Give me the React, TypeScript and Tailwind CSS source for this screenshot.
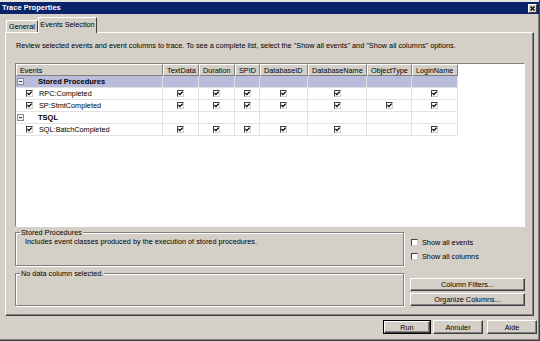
import React from "react";

const colW = [
  "w-[147px]",
  "w-[36px]",
  "w-[36px]",
  "w-[25px]",
  "w-[48px]",
  "w-[59px]",
  "w-[45px]",
  "w-[46px]",
];
const headers = ["Events", "TextData", "Duration", "SPID", "DatabaseID", "DatabaseName", "ObjectType", "LoginName"];

type Row =
  | { kind: "group"; label: string; selected?: boolean }
  | { kind: "item"; label: string; checks: boolean[] };

const rows: Row[] = [
  { kind: "group", label: "Stored Procedures", selected: true },
  { kind: "item", label: "RPC:Completed", checks: [true, true, true, true, true, false, true] },
  { kind: "item", label: "SP:StmtCompleted", checks: [true, true, true, true, true, true, true] },
  { kind: "group", label: "TSQL" },
  { kind: "item", label: "SQL:BatchCompleted", checks: [true, true, true, true, true, false, true] },
];

function Box({ checked }: { checked?: boolean }) {
  return (
    <span className="flex h-[7px] w-[7px] shrink-0 items-center justify-center border border-t-[#404040] border-l-[#404040] border-r-[#d4d0c8] border-b-[#d4d0c8] bg-white">
      {checked && (
        <svg width="5" height="5" viewBox="0 0 5 5">
          <path d="M0.4 2 L1.9 3.6 L4.6 0.7" fill="none" stroke="#000" strokeWidth="1.3" />
        </svg>
      )}
    </span>
  );
}

function Btn({ children, className }: { children: React.ReactNode; className: string }) {
  return (
    <div
      className={
        "flex items-center justify-center border border-t-white border-l-white border-r-[#404040] border-b-[#404040] shadow-[inset_-1px_-1px_0_#808080] " +
        className
      }
    >
      {children}
    </div>
  );
}

export default function App() {
  return (
    <div className="flex h-[341px] w-[540px] flex-col overflow-hidden border-r border-b border-[#404040] bg-[#d4d0c8] font-['Liberation_Sans',Arial,sans-serif] text-[7.3px] leading-[9px] text-black shadow-[inset_-1px_-1px_0_#808080]">
      {/* top strip */}
      <div className="h-[2px] shrink-0 bg-[#e6e4df]" />
      {/* title bar */}
      <div className="flex h-[12px] shrink-0 items-center justify-between bg-[#0a246a] pl-[2px] pr-[2px]">
        <span className="text-[7.5px] font-bold leading-[10px] text-white">Trace Properties</span>
        <span className="flex h-[9px] w-[9px] items-center justify-center border border-t-white border-l-white border-r-[#404040] border-b-[#404040] bg-[#d4d0c8]">
          <svg width="5" height="5" viewBox="0 0 5 5">
            <path d="M0.5 0.5 L4.5 4.5 M4.5 0.5 L0.5 4.5" stroke="#000" strokeWidth="1.2" />
          </svg>
        </span>
      </div>
      {/* tabs */}
      <div className="flex h-[18px] shrink-0 items-end pl-[6px]">
        <div className="flex h-[12px] w-[32px] items-center justify-center rounded-t-[1px] border-t border-l border-r border-t-white border-l-white border-r-[#404040]">
          General
        </div>
        <div className="relative z-10 -mb-[1px] flex h-[16px] w-[59px] items-center justify-center rounded-t-[1px] border-t border-l border-r border-t-white border-l-white border-r-[#404040] bg-[#d4d0c8] pb-[2px] whitespace-nowrap">
          Events Selection
        </div>
      </div>
      {/* panel */}
      <div className="ml-[5px] flex h-[284px] w-[529px] shrink-0 flex-col border border-t-white border-l-white border-r-[#404040] border-b-[#404040] pl-[9px] pt-[8px] shadow-[inset_-1px_-1px_0_#808080]">
        <p className="ml-[1px] h-[9px] whitespace-nowrap">
          Review selected events and event columns to trace. To see a complete list, select the "Show all events" and "Show all columns" options.
        </p>
        {/* table */}
        <div className="mt-[13px] flex h-[164px] w-[510px] shrink-0 flex-col border border-t-[#808080] border-l-[#808080] border-r-white border-b-white bg-white">
          <div className="flex h-[12px] shrink-0">
            {headers.map((h, i) => (
              <div
                key={h}
                className={
                  colW[i] +
                  " flex items-center border border-t-white border-l-white border-r-[#808080] border-b-[#808080] bg-[#d4d0c8] pl-[3px] whitespace-nowrap overflow-hidden"
                }
              >
                {h}
              </div>
            ))}
          </div>
          {rows.map((r, ri) =>
            r.kind === "group" ? (
              <div key={ri} className={"flex h-[12px] w-[442px] shrink-0 border-b border-[#e2e2e2] " + (r.selected ? "bg-[#b9bcda]" : "bg-white")}>
                <div className="flex w-[147px] items-center border-r border-[#e2e2e2]">
                  <span className="ml-[1px] flex h-[7px] w-[7px] items-center justify-center border border-[#8a8a8a] bg-[#f2f2f2]">
                    <span className="h-[1px] w-[3px] bg-[#333]" />
                  </span>
                  <span className="ml-[14px] text-[7.5px] font-bold">{r.label}</span>
                </div>
                {colW.slice(1).map((c, ci) => (
                  <div key={ci} className={c + " border-r border-[#e2e2e2]"} />
                ))}
              </div>
            ) : (
              <div key={ri} className="flex h-[12px] w-[442px] shrink-0 border-b border-[#e2e2e2]">
                <div className="flex w-[147px] items-center border-r border-[#e2e2e2]">
                  <span className="ml-[10px]">
                    <Box checked />
                  </span>
                  <span className="ml-[6px] whitespace-nowrap">{r.label}</span>
                </div>
                {colW.slice(1).map((c, ci) => (
                  <div key={ci} className={c + " flex items-center justify-center border-r border-[#e2e2e2]"}>
                    {r.checks[ci] && <Box checked />}
                  </div>
                ))}
              </div>
            )
          )}
        </div>
        {/* lower section */}
        <div className="flex">
          <div className="flex w-[389px] flex-col">
            <div className="relative mt-[5px] h-[34px] border border-[#808080] shadow-[inset_1px_1px_0_#fff,1px_1px_0_#fff]">
              <span className="absolute left-[4px] top-[-5px] bg-[#d4d0c8] px-[1px] leading-[9px] whitespace-nowrap">Stored Procedures</span>
              <div className="ml-[9px] mt-[4px] whitespace-nowrap">Includes event classes produced by the execution of stored procedures.</div>
            </div>
            <div className="relative mt-[7px] h-[33px] border border-[#808080] shadow-[inset_1px_1px_0_#fff,1px_1px_0_#fff]">
              <span className="absolute left-[4px] top-[-5px] bg-[#d4d0c8] px-[1px] leading-[9px] whitespace-nowrap">No data column selected.</span>
            </div>
          </div>
          <div className="ml-[6px] flex w-[115px] flex-col">
            <div className="mt-[11px] flex h-[9px] items-center pl-[1px]">
              <Box />
              <span className="ml-[4px] whitespace-nowrap">Show all events</span>
            </div>
            <div className="mt-[5px] flex h-[9px] items-center pl-[1px]">
              <Box />
              <span className="ml-[4px] whitespace-nowrap">Show all columns</span>
            </div>
            <Btn className="mt-[17px] h-[13px] w-[115px]">Column Filters...</Btn>
            <Btn className="mt-[2px] h-[13px] w-[115px]">Organize Columns...</Btn>
          </div>
        </div>
      </div>
      {/* bottom buttons */}
      <div className="mt-[4px] flex shrink-0 justify-end pr-[2px]">
        <div className="h-[14px] w-[48px] border border-black">
          <Btn className="h-full w-full">Run</Btn>
        </div>
        <Btn className="ml-[2px] h-[14px] w-[50px]">Annuler</Btn>
        <Btn className="ml-[4px] h-[14px] w-[50px]">Aide</Btn>
      </div>
    </div>
  );
}
